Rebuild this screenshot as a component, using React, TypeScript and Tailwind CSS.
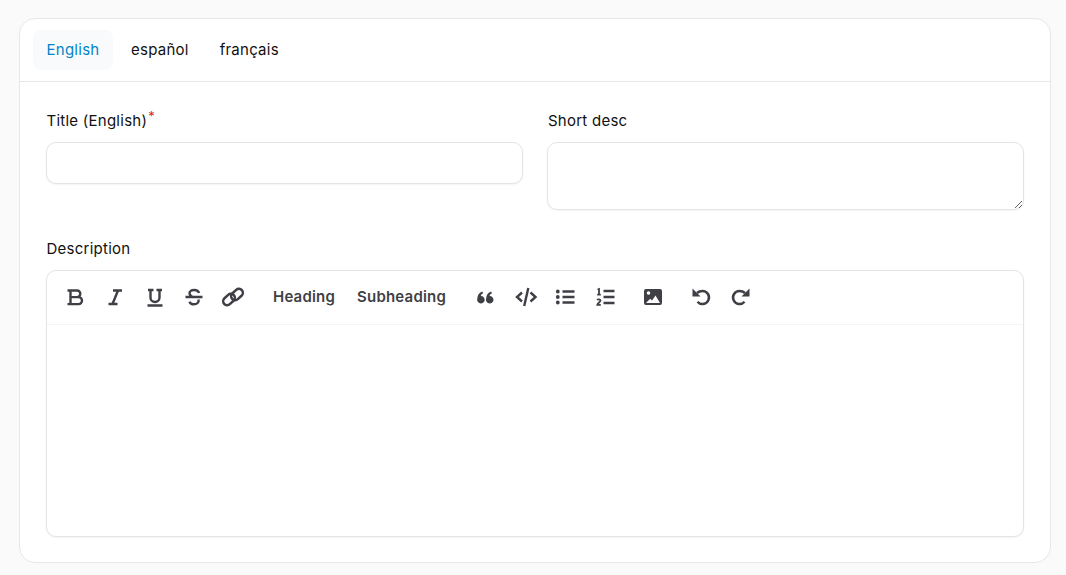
import React from "react";

const c = "#3f3f46";
function I({ children, sw = 2.4 }: { children: React.ReactNode; sw?: number }) {
  return (
    <svg width={24} height={24} viewBox="0 0 24 24" fill="none" stroke={c} strokeWidth={sw} className="block">
      {children}
    </svg>
  );
}

function Btn({ children }: { children: React.ReactNode }) {
  return <button className="h-[32px] w-[32px] shrink-0 flex items-center justify-center">{children}</button>;
}

function TextBtn({ children }: { children: React.ReactNode }) {
  return <button className="h-[32px] px-[6px] shrink-0 text-[15px] tracking-[0.2px] font-semibold text-[#3f3f46] leading-[32px]">{children}</button>;
}

export default function App() {
  return (
    <div className="min-h-[575px] bg-[#fafafa] pt-[18px] pl-[19px] pr-[15px] pb-[12px] font-['Inter',sans-serif] text-[15px] tracking-[0.25px] font-normal text-[#111111]">
      <div className="rounded-[16px] border border-[#e5e7eb] bg-white h-[545px] flex flex-col">
        <div className="h-[63px] border-b border-[#e5e7eb] flex items-start pt-[11px] pl-[13px] gap-[4px] shrink-0">
          <button className="h-[40px] w-[80px] rounded-[8px] bg-[#f9fafb] text-[#0284c7]">English</button>
          <button className="h-[40px] px-[14px]">español</button>
          <button className="h-[40px] px-[13px]">français</button>
        </div>
        <div className="flex-1 px-[26px] pt-[28px] flex flex-col">
          <div className="grid grid-cols-2 gap-[24px] items-start">
            <div>
              <div className="h-[20px] leading-[22px] pl-[0.5px]">
                Title (English)<span className="inline-block align-top text-[#dc2626] text-[13px] leading-[13px] ml-[1px]">*</span>
              </div>
              <input className="mt-[12px] block w-full h-[42px] rounded-[10px] border border-[#e4e4e7] bg-white shadow-[0_1px_2px_rgba(0,0,0,0.05)]" />
            </div>
            <div>
              <div className="h-[20px] leading-[22px] pl-[1px]">Short desc</div>
              <textarea className="mt-[12px] block w-full h-[68px] rounded-[10px] border border-[#e4e4e7] bg-white shadow-[0_1px_2px_rgba(0,0,0,0.05)]" />
            </div>
          </div>
          <div className="h-[20px] leading-[20px] mt-[29px] pl-[0.5px]">Description</div>
          <div className="mt-[11px] h-[267px] rounded-[10px] border border-[#e4e4e7] bg-white flex flex-col shadow-[0_1px_2px_rgba(0,0,0,0.05)]">
            <div className="h-[54px] pb-[2px] border-b border-[#f3f4f6] flex items-center pl-[12px] shrink-0">
              <Btn>
                <I>
                  <path d="M4.500 5.500H14a3.300 3.300 0 0 1 0 6.600H7M7 12.100h8.500a3.500 3.500 0 0 1 0 7H4.500M7.500 5.500v13.600" />
                </I>
              </Btn>
              <span className="w-[8px]" />
              <Btn>
                <I>
                  <path d="M10 5.500h9M5.500 19h9M15 5.500 9.500 19" />
                </I>
              </Btn>
              <span className="w-[8px]" />
              <Btn>
                <I>
                  <path d="M5 5h5.500M13.500 5H19M7.500 5v7.500a4.500 4.500 0 0 0 9 0V5M4.500 20.500h15" />
                </I>
              </Btn>
              <span className="w-[7px]" />
              <Btn>
                <I>
                  <path d="M3.500 12h17M17 8c-.5-2-2.500-3-5-3-2.700 0-4.500 1.200-4.500 3.300 0 1.700 1.300 2.700 3 3.700M16.500 14.500c.8 3.300-2 4.800-4.500 4.800-2 0-3.800-.8-4.500-2.600" />
                </I>
              </Btn>
              <span className="w-[7px]" />
              <Btn>
                <I sw={2.5}>
                  <rect x="1.500" y="10.500" width="13" height="8" rx="4" transform="rotate(-42 8 14.500)" />
                  <rect x="9.500" y="5.500" width="13" height="8" rx="4" transform="rotate(-42 16 9.500)" />
                </I>
              </Btn>
              <span className="w-[18px]" />
              <TextBtn>Heading</TextBtn>
              <span className="w-[10px]" />
              <TextBtn>Subheading</TextBtn>
              <span className="w-[18px]" />
              <Btn>
                <I>
                  <path fill={c} stroke="none" d="M3.400 13.200C3.400 9.900 5.400 7.500 8.300 6.500l.9 1.800c-1.300.6-2.100 1.400-2.400 2.600a3.800 3.800 0 1 1-3.400 2.300ZM12.200 13.200c0-3.300 2-5.700 4.900-6.700l.9 1.800c-1.300.6-2.100 1.400-2.400 2.600a3.800 3.800 0 1 1-3.400 2.300Z" />
                </I>
              </Btn>
              <span className="w-[8px]" />
              <Btn>
                <I>
                  <path d="M8 7.500 3 12l5 4.500M16.500 7.500l5 4.500-5 4.500M14.300 3l-4.100 18" />
                </I>
              </Btn>
              <span className="w-[8px]" />
              <Btn>
                <I>
                  <path d="M8.500 6.500h12M8.500 12h12M8.500 17.500h12" />
                  <path fill={c} stroke="none" d="M5.700 6.500a1.900 1.900 0 1 1-3.800 0 1.900 1.900 0 0 1 3.800 0ZM5.700 12a1.900 1.900 0 1 1-3.800 0 1.900 1.900 0 0 1 3.800 0ZM5.700 17.500a1.900 1.900 0 1 1-3.800 0 1.900 1.900 0 0 1 3.800 0Z" />
                </I>
              </Btn>
              <span className="w-[8px]" />
              <Btn>
                <I>
                  <path d="M9.500 6h11M9.500 12h11M9.500 18h11" />
                  <path strokeWidth={1.800} d="M3.500 4.500 5 4v5.500M3.200 9.700h3.600M3.200 15c.7-1.200 3.400-.8 3.300.8-.1 1.300-2.900 2.200-3.200 4h3.500" />
                </I>
              </Btn>
              <span className="w-[15px]" />
              <Btn>
                <I>
                  <path fill={c} stroke="none" fillRule="evenodd" d="M5 4h14a2 2 0 0 1 2 2v12a2 2 0 0 1-2 2H5a2 2 0 0 1-2-2V6a2 2 0 0 1 2-2Zm2.500 2.200a1.800 1.800 0 1 0 0 3.600 1.800 1.800 0 0 0 0-3.600ZM5 18h14l-4.500-7.500-3.500 5-1.800-1.800Z" />
                </I>
              </Btn>
              <span className="w-[16px]" />
              <Btn>
                <I sw={2.500}>
                  <path d="M8 8C9.500 6.700 11.300 6 13.500 6a6.500 6.500 0 1 1-5 10.700" />
                  <path fill={c} stroke="none" d="M3.500 3.500v8h8Z" />
                </I>
              </Btn>
              <span className="w-[8px]" />
              <Btn>
                <I sw={2.500}>
                  <path d="M16 8C14.500 6.700 12.700 6 10.500 6a6.500 6.500 0 1 0 5 10.700" />
                  <path fill={c} stroke="none" d="M20.500 3.500v8h-8Z" />
                </I>
              </Btn>
            </div>
            <div className="flex-1" />
          </div>
        </div>
      </div>
    </div>
  );
}
